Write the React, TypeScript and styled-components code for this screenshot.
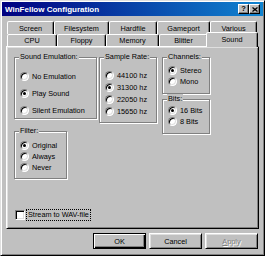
import React from 'react';
import styled, { createGlobalStyle, css } from 'styled-components';

const Global = createGlobalStyle`
  html, body { margin: 0; padding: 0; background: #c0c0c0; }
  body { font-family: "Liberation Sans", Arial, sans-serif; font-size: 7.3px; color: #000; }
`;

const Window = styled.div`
  box-sizing: border-box;
  width: 265px;
  height: 256px;
  background: #c0c0c0;
  border: 1px solid;
  border-color: #dfdfdf #000 #000 #dfdfdf;
  box-shadow: inset 1px 1px 0 #fff, inset -1px -1px 0 #808080;
  padding: 1px;
  display: flex;
  flex-direction: column;
`;

const TitleBar = styled.div`
  height: 14px;
  flex: none;
  background: linear-gradient(90deg, #000080, #1084d0);
  display: flex;
  align-items: center;
  padding: 0 3px 0 3px;
  color: #fff;
  font-weight: bold;
  font-size: 8px;
`;

const Title = styled.span`
  flex: 1;
`;

const TitleButton = styled.div<{ $gap?: number }>`
  width: 11px;
  height: 10px;
  box-sizing: border-box;
  background: #c0c0c0;
  border: 1px solid;
  border-color: #fff #000 #000 #fff;
  box-shadow: inset -1px -1px 0 #808080;
  margin-left: ${(p) => p.$gap ?? 0}px;
  display: grid;
  place-items: center;
  color: #000;
  font-size: 7.5px;
  font-weight: bold;
  line-height: 1;
`;

const Body = styled.div`
  padding: 5px 4px 0;
  display: flex;
  flex-direction: column;
`;

const TabStrip = styled.div`
  padding-left: 1px;
  display: flex;
  flex-direction: column;
`;

const TabRow = styled.div<{ $h: number }>`
  display: flex;
  height: ${(p) => p.$h}px;
`;

const Tab = styled.div<{ $w: number; $active?: boolean }>`
  box-sizing: border-box;
  width: ${(p) => p.$w}px;
  height: 100%;
  flex: none;
  border: 1px solid;
  border-bottom: none;
  border-color: #fff #000 transparent #fff;
  border-radius: 2px 2px 0 0;
  box-shadow: inset -1px 0 0 #808080;
  background: #c0c0c0;
  display: flex;
  align-items: center;
  justify-content: center;
  ${(p) =>
    p.$active &&
    css`
      position: relative;
      z-index: 1;
      width: ${p.$w + 4}px;
      height: calc(100% + 3px);
      margin: -2px -2px 0;
      padding-bottom: 2px;
    `}
`;

const Panel = styled.div`
  box-sizing: border-box;
  height: 183px;
  border: 1px solid;
  border-color: #fff #000 #000 #fff;
  box-shadow: inset 1px 1px 0 #dfdfdf, inset -1px -1px 0 #808080;
  padding: 10px 0 0 7px;
  display: flex;
  flex-direction: column;
`;

const Groups = styled.div`
  display: flex;
  align-items: flex-start;
`;

const Column = styled.div<{ $ml?: number }>`
  display: flex;
  flex-direction: column;
  margin-left: ${(p) => p.$ml ?? 0}px;
`;

const Group = styled.div<{ $w: number; $h: number; $mt?: number }>`
  box-sizing: border-box;
  width: ${(p) => p.$w}px;
  height: ${(p) => p.$h}px;
  margin-top: ${(p) => p.$mt ?? 0}px;
  border: 1px solid #808080;
  box-shadow: inset 1px 1px 0 #fff, 1px 1px 0 #fff;
  padding: 0 0 0 5px;
  display: flex;
  flex-direction: column;
`;

const Legend = styled.div`
  align-self: flex-start;
  margin: -6px 0 -4px -1px;
  padding: 0 1px;
  background: #c0c0c0;
  line-height: 10px;
  height: 10px;
`;

const OptionRow = styled.div<{ $h?: number; $mt: number }>`
  display: flex;
  align-items: center;
  height: ${(p) => p.$h ?? 11}px;
  margin-top: ${(p) => p.$mt}px;
  gap: 3px;
  flex: none;
`;

const Radio = styled.span<{ $checked?: boolean }>`
  box-sizing: border-box;
  width: 9px;
  height: 9px;
  flex: none;
  border-radius: 50%;
  background: #fff;
  border: 1px solid;
  border-color: #808080 #fff #fff #808080;
  box-shadow: inset 1px 1px 0 #000, inset -1px -1px 0 #dfdfdf;
  display: grid;
  place-items: center;
  &::after {
    content: '';
    width: 3px;
    height: 3px;
    border-radius: 50%;
    background: ${(p) => (p.$checked ? '#000' : 'transparent')};
  }
`;

const CheckRow = styled.div`
  display: flex;
  align-items: center;
  height: 12px;
  margin: 30px 0 0 1px;
  gap: 1px;
`;

const CheckBox = styled.span`
  box-sizing: border-box;
  width: 10px;
  height: 10px;
  background: #fff;
  border: 1px solid;
  border-color: #808080 #fff #fff #808080;
  box-shadow: inset 1px 1px 0 #000, inset -1px -1px 0 #dfdfdf;
`;

const FocusLabel = styled.span`
  border: 1px dotted #000;
  padding: 0 1px;
  line-height: 10px;
`;

const ButtonRow = styled.div`
  display: flex;
  justify-content: flex-end;
  gap: 3px;
  margin: 4px 1px 0 0;
`;

const Button = styled.div<{ $default?: boolean; $disabled?: boolean }>`
  box-sizing: border-box;
  width: 53px;
  height: 16px;
  display: flex;
  align-items: center;
  justify-content: center;
  background: #c0c0c0;
  border: 1px solid;
  border-color: #fff #000 #000 #fff;
  box-shadow: inset 1px 1px 0 #dfdfdf, inset -1px -1px 0 #808080;
  ${(p) =>
    p.$default &&
    css`
      border-color: #000;
      box-shadow: inset 1px 1px 0 #fff, inset -1px -1px 0 #000, inset -2px -2px 0 #808080;
    `}
  ${(p) =>
    p.$disabled &&
    css`
      color: #808080;
      text-shadow: 1px 1px 0 #fff;
    `}
`;

const Accel = styled.span`
  text-decoration: underline;
`;

type Opt = { label: string; checked?: boolean };

const OptionGroup: React.FC<{
  legend: string;
  w: number;
  h: number;
  pt: number;
  gap?: number;
  mt?: number;
  rowH?: number;
  options: Opt[];
}> = ({ legend, w, h, pt, gap = 0, mt, rowH, options }) => (
  <Group $w={w} $h={h} $mt={mt}>
    <Legend>{legend}</Legend>
    {options.map((o, i) => (
      <OptionRow key={o.label} $h={rowH} $mt={i === 0 ? pt : gap}>
        <Radio $checked={o.checked} />
        <span>{o.label}</span>
      </OptionRow>
    ))}
  </Group>
);

const row1 = [
  { label: 'Screen', w: 47 },
  { label: 'Filesystem', w: 55 },
  { label: 'Hardfile', w: 48 },
  { label: 'Gameport', w: 53 },
  { label: 'Various', w: 47 },
];

const row2 = [
  { label: 'CPU', w: 50 },
  { label: 'Floppy', w: 49 },
  { label: 'Memory', w: 53 },
  { label: 'Blitter', w: 49 },
  { label: 'Sound', w: 48, active: true },
];

export default function App() {
  return (
    <>
      <Global />
      <Window>
        <TitleBar>
          <Title>WinFellow Configuration</Title>
          <TitleButton>?</TitleButton>
          <TitleButton $gap={0}>
            <svg width="6" height="5" viewBox="0 0 6 5">
              <path d="M0.5 0.5 L5.5 4.5 M5.5 0.5 L0.5 4.5" stroke="#000" strokeWidth="1.3" />
            </svg>
          </TitleButton>
        </TitleBar>
        <Body>
          <TabStrip>
            <TabRow $h={13}>
              {row1.map((t) => (
                <Tab key={t.label} $w={t.w}>
                  {t.label}
                </Tab>
              ))}
            </TabRow>
            <TabRow $h={12}>
              {row2.map((t) => (
                <Tab key={t.label} $w={t.w} $active={t.active}>
                  {t.label}
                </Tab>
              ))}
            </TabRow>
          </TabStrip>
          <Panel>
            <Groups>
              <Column>
                <OptionGroup
                  legend="Sound Emulation:"
                  w={83}
                  h={62}
                  pt={13}
                  gap={6}
                  options={[
                    { label: 'No Emulation' },
                    { label: 'Play Sound', checked: true },
                    { label: 'Silent Emulation' },
                  ]}
                />
                <OptionGroup
                  legend="Filter:"
                  w={53}
                  h={48}
                  pt={8}
                  mt={12}
                  options={[
                    { label: 'Original', checked: true },
                    { label: 'Always' },
                    { label: 'Never' },
                  ]}
                />
              </Column>
              <Column $ml={2}>
                <OptionGroup
                  legend="Sample Rate:"
                  w={58}
                  h={66}
                  pt={11}
                  rowH={12}
                  options={[
                    { label: '44100 hz' },
                    { label: '31300 hz', checked: true },
                    { label: '22050 hz' },
                    { label: '15650 hz' },
                  ]}
                />
              </Column>
              <Column $ml={5}>
                <OptionGroup
                  legend="Channels:"
                  w={48}
                  h={37}
                  pt={7}
                  options={[{ label: 'Stereo', checked: true }, { label: 'Mono' }]}
                />
                <OptionGroup
                  legend="Bits:"
                  w={48}
                  h={35}
                  pt={5}
                  mt={5}
                  options={[{ label: '16 Bits', checked: true }, { label: '8 Bits' }]}
                />
              </Column>
            </Groups>
            <CheckRow>
              <CheckBox />
              <FocusLabel>Stream to WAV-file</FocusLabel>
            </CheckRow>
          </Panel>
          <ButtonRow>
            <Button $default>OK</Button>
            <Button>Cancel</Button>
            <Button $disabled>
              <Accel>A</Accel>pply
            </Button>
          </ButtonRow>
        </Body>
      </Window>
    </>
  );
}
